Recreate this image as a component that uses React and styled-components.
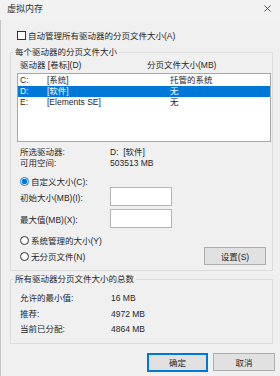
import React from "react";
import styled, { createGlobalStyle } from "styled-components";

const Global = createGlobalStyle`
  html, body {
    margin: 0;
    padding: 0;
    background: #f0f0f0;
  }
  body {
    font-family: "Liberation Sans", "Noto Sans CJK SC", sans-serif;
    font-size: 8.5px;
    color: #262626;
  }
`;

const drives = [
    { letter: "C:", label: "[系统]", size: "托管的系统" },
    { letter: "D:", label: "[软件]", size: "无", selected: true },
    { letter: "E:", label: "[Elements SE]", size: "无" },
];

export default function App() {
    return (
        <>
            <Global />
            <Window>
                <TitleBar>
                    <span>虚拟内存</span>
                    <CloseIcon viewBox="0 0 8 8">
                        <path d="M0.5 0.5 L7.5 7.5 M7.5 0.5 L0.5 7.5" />
                    </CloseIcon>
                </TitleBar>
                <Body>
                    <CheckRow>
                        <CheckBox />
                        <span>自动管理所有驱动器的分页文件大小(A)</span>
                    </CheckRow>

                    <Group>
                        <Legend>每个驱动器的分页文件大小</Legend>
                        <HeaderRow>
                            <HeadCol>驱动器 [卷标](D)</HeadCol>
                            <span>分页文件大小(MB)</span>
                        </HeaderRow>
                        <ListBox>
                            {drives.map((d) => (
                                <ListRow key={d.letter} $selected={d.selected}>
                                    <LetterCol>{d.letter}</LetterCol>
                                    <LabelCol>{d.label}</LabelCol>
                                    <span>{d.size}</span>
                                </ListRow>
                            ))}
                        </ListBox>

                        <InfoRow $first>
                            <InfoLabel>所选驱动器:</InfoLabel>
                            <span>D:&nbsp;&nbsp;[软件]</span>
                        </InfoRow>
                        <InfoRow>
                            <InfoLabel>可用空间:</InfoLabel>
                            <span>503513 MB</span>
                        </InfoRow>

                        <RadioRow $top={6}>
                            <Radio $checked />
                            <span>自定义大小(C):</span>
                        </RadioRow>
                        <FieldRow $top={0}>
                            <InfoLabel>初始大小(MB)(I):</InfoLabel>
                            <TextBox />
                        </FieldRow>
                        <FieldRow $top={3}>
                            <InfoLabel>最大值(MB)(X):</InfoLabel>
                            <TextBox />
                        </FieldRow>
                        <RadioRow $top={6}>
                            <Radio />
                            <span>系统管理的大小(Y)</span>
                        </RadioRow>
                        <LastRow>
                            <RadioLine>
                                <Radio />
                                <span>无分页文件(N)</span>
                            </RadioLine>
                            <Button $width={62}>设置(S)</Button>
                        </LastRow>
                    </Group>

                    <Group $top={2}>
                        <Legend>所有驱动器分页文件大小的总数</Legend>
                        <TotalList>
                            <TotalRow>
                                <TotalLabel>允许的最小值:</TotalLabel>
                                <span>16 MB</span>
                            </TotalRow>
                            <TotalRow>
                                <TotalLabel>推荐:</TotalLabel>
                                <span>4972 MB</span>
                            </TotalRow>
                            <TotalRow>
                                <TotalLabel>当前已分配:</TotalLabel>
                                <span>4864 MB</span>
                            </TotalRow>
                        </TotalList>
                    </Group>

                    <ButtonRow>
                        <Button $width={61} $default>确定</Button>
                        <Button $width={62}>取消</Button>
                    </ButtonRow>
                </Body>
            </Window>
        </>
    );
}

const Window = styled.div`
  width: 280px;
  height: 376px;
  display: flex;
  flex-direction: column;
  overflow: hidden;
  background: #f0f0f0;
`;

const TitleBar = styled.div`
  height: 20px;
  box-sizing: border-box;
  display: flex;
  align-items: center;
  justify-content: space-between;
  padding: 0 9px 4px 7px;
  background: #f2f2f2;
  font-size: 9px;
  color: #333;
`;

const CloseIcon = styled.svg`
  width: 7px;
  height: 7px;
  fill: none;
  stroke: #444;
  stroke-width: 1;
`;

const Body = styled.div`
  flex: 1;
  display: flex;
  flex-direction: column;
  border-left: 1px solid #c4c4c4;
  padding: 0 5px 0 9px;
`;

const CheckRow = styled.div`
  display: flex;
  align-items: center;
  gap: 2px;
  height: 12px;
  margin: 9px 0 0 7px;
`;

const CheckBox = styled.span`
  width: 9px;
  height: 9px;
  box-sizing: border-box;
  border: 1px solid #333;
  background: #fff;
`;

const Group = styled.fieldset`
  margin: ${(p) => p.$top ?? 5}px 2px 0 0;
  padding: 0 1px 5px 6px;
  border: 1px solid #dcdcdc;
  min-width: 0;
`;

const Legend = styled.legend`
  margin-left: -4px;
  padding: 0 2px;
  line-height: 12px;
  height: 12px;
`;

const HeaderRow = styled.div`
  display: flex;
  height: 12px;
  line-height: 12px;
  margin-top: 1px;
  padding-left: 3px;
`;

const HeadCol = styled.span`
  width: 127px;
`;

const ListBox = styled.div`
  margin-top: 2px;
  height: 69px;
  box-sizing: border-box;
  border: 1px solid #a8a8a8;
  background: #fff;
  padding-top: 1px;
`;

const ListRow = styled.div`
  display: flex;
  height: 11px;
  line-height: 11px;
  padding-left: 2px;
  background: ${(p) => (p.$selected ? "#0078d7" : "transparent")};
  color: ${(p) => (p.$selected ? "#fff" : "#262626")};
`;

const LetterCol = styled.span`
  width: 27px;
`;

const LabelCol = styled.span`
  width: 123px;
`;

const InfoRow = styled.div`
  display: flex;
  height: 11px;
  line-height: 11px;
  padding-left: 3px;
  margin-top: ${(p) => (p.$first ? 5 : 0)}px;
`;

const InfoLabel = styled.span`
  width: 90px;
`;

const RadioRow = styled.div`
  display: flex;
  align-items: center;
  gap: 2px;
  height: 12px;
  padding-left: 3px;
  margin-top: ${(p) => p.$top}px;
`;

const Radio = styled.span`
  width: 9px;
  height: 9px;
  box-sizing: border-box;
  border-radius: 50%;
  border: 1px solid ${(p) => (p.$checked ? "#0078d7" : "#333")};
  background: ${(p) =>
        p.$checked ? "radial-gradient(circle, #0078d7 0 2.6px, #fff 3px)" : "#fff"};
`;

const FieldRow = styled.div`
  display: flex;
  align-items: center;
  height: 19px;
  padding-left: 3px;
  margin-top: ${(p) => p.$top}px;
`;

const TextBox = styled.div`
  width: 62px;
  height: 19px;
  box-sizing: border-box;
  border: 1px solid #b4b4b4;
  background: #fff;
`;

const LastRow = styled.div`
  display: flex;
  align-items: center;
  justify-content: space-between;
  height: 18px;
  margin-top: 1px;
  padding-left: 3px;
  padding-right: 5px;
`;

const RadioLine = styled.div`
  display: flex;
  align-items: center;
  gap: 2px;
`;

const Button = styled.div`
  width: ${(p) => p.$width}px;
  height: ${(p) => (p.$default ? 19 : 18)}px;
  box-sizing: border-box;
  display: flex;
  align-items: center;
  justify-content: center;
  background: #e1e1e1;
  border: ${(p) => (p.$default ? "2px solid #0078d7" : "1px solid #adadad")};
  color: #262626;
`;

const TotalList = styled.div`
  padding: 6px 0 0 3px;
`;

const TotalRow = styled.div`
  display: flex;
  height: 15.5px;
  line-height: 15.5px;
`;

const TotalLabel = styled.span`
  width: 91px;
`;

const ButtonRow = styled.div`
  display: flex;
  justify-content: flex-end;
  gap: 5px;
  margin-top: 9px;
`;
